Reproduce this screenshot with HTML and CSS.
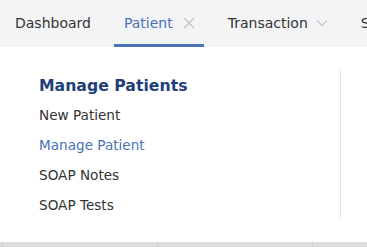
FILE: index.html
```html
<!DOCTYPE html>
<html>
<head>
<meta charset="utf-8">
<link rel="stylesheet" href="styles.css">
</head>
<body>
<nav class="tabs">
  <div class="tab">Dashboard</div>
  <div class="tab active">Patient
    <svg class="ico" width="12" height="12" viewBox="0 0 12 12"><path d="M1 1L11 11M11 1L1 11" stroke="#c4c4c4" stroke-width="1.4" fill="none"/></svg>
  </div>
  <div class="tab">Transaction
    <svg class="ico chev" width="12" height="12" viewBox="0 0 12 12"><path d="M1 3.5L6 8.5L11 3.5" stroke="#c4c4c4" stroke-width="1.2" fill="none"/></svg>
  </div>
  <div class="tab">Settings</div>
</nav>
<section class="panel">
  <div class="col">
    <h2 class="heading">Manage Patients</h2>
    <a class="item">New Patient</a>
    <a class="item current">Manage Patient</a>
    <a class="item">SOAP Notes</a>
    <a class="item">SOAP Tests</a>
  </div>
  <div class="divider"></div>
</section>
<div class="footer">
  <div class="fcell"></div>
  <div class="fcell"></div>
  <div class="fcell"></div>
</div>
</body>
</html>
```
FILE: styles.css
```css
* { box-sizing: border-box; }
html, body { margin: 0; padding: 0; background: #fff; overflow: hidden; }
body { width: 367px; height: 247px; font-family: "DejaVu Sans", Verdana, sans-serif; color: #333; }
.tabs {
  display: flex;
  width: 367px;
  height: 47px;
  background: #f3f4f6;
  padding-left: 5px;
  white-space: nowrap;
  overflow: hidden;
}
.tab {
  display: flex;
  flex-shrink: 0;
  align-items: center;
  gap: 10px;
  padding: 2px 9px 0 10px;
  font-size: 14px;
  color: #333;
  border-bottom: 3px solid transparent;
  margin-right: 14px;
}
.tab .chev { margin-left: -2px; }
.tab.active { color: #4a72b5; border-bottom-color: #4a72b5; }
.panel {
  display: flex;
  height: 195px;
  padding-top: 23px;
}
.col {
  display: flex;
  flex-direction: column;
  padding-left: 39px;
  width: 340px;
}
.heading {
  margin: 5px 0 3px;
  font-size: 15.7px;
  font-weight: bold;
  color: #1f3f7a;
  line-height: 22px;
}
.item {
  font-size: 13.6px;
  line-height: 30px;
  color: #333;
}
.item.current { color: #4a72b5; }
.divider {
  width: 1px;
  background: #e0e0e0;
  margin-bottom: 24px;
}
.footer {
  display: flex;
  height: 5px;
  background: #dcdcdc;
  padding-left: 2px;
  overflow: hidden;
}
.fcell { width: 155px; flex-shrink: 0; border-left: 1px solid #d0d0d0; }
```
